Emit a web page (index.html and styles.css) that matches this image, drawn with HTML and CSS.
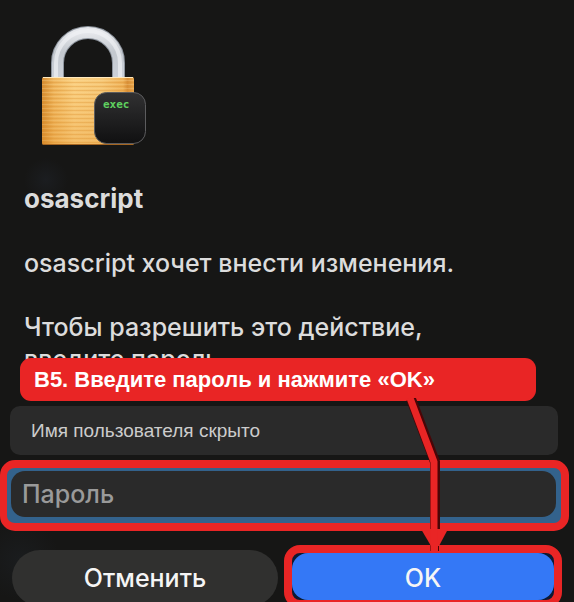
FILE: index.html
```
<!DOCTYPE html>
<html lang="ru">
<head>
  <meta charset="UTF-8">
  <meta name="viewport" content="width=device-width, initial-scale=1">
  <title>osascript</title>
  <link rel="stylesheet" href="styles.css">
</head>
<body>
  <form class="dialog">
    <svg class="lock" width="116" height="124" viewBox="0 0 116 124" aria-hidden="true">
      <defs>
        <linearGradient id="brass" x1="0" x2="1" y1="0" y2="0">
          <stop offset="0" stop-color="#d48a30"/>
          <stop offset="0.04" stop-color="#dc983e"/>
          <stop offset="0.13" stop-color="#efb65e"/>
          <stop offset="0.35" stop-color="#fad082"/>
          <stop offset="0.65" stop-color="#f6c878"/>
          <stop offset="0.88" stop-color="#eeb158"/>
          <stop offset="0.93" stop-color="#d99039"/>
          <stop offset="1" stop-color="#e9a84f"/>
        </linearGradient>
        <linearGradient id="shade" x1="0" x2="0" y1="0" y2="1">
          <stop offset="0" stop-color="#e8952a" stop-opacity="0"/>
          <stop offset="1" stop-color="#e08a20" stop-opacity="0.3"/>
        </linearGradient>
        <linearGradient id="steel" x1="0" x2="0" y1="0" y2="1">
          <stop offset="0" stop-color="#e6e8ec"/>
          <stop offset="0.4" stop-color="#c3c8ce"/>
          <stop offset="1" stop-color="#cdd2da"/>
        </linearGradient>
        <linearGradient id="badge" x1="0" x2="0" y1="0" y2="1">
          <stop offset="0" stop-color="#313132"/>
          <stop offset="1" stop-color="#101011"/>
        </linearGradient>
        <pattern id="lines" width="8" height="4" patternUnits="userSpaceOnUse">
          <rect y="1" width="8" height="1" fill="#d98c2c" opacity="0.3"/>
          <rect y="3" width="8" height="1" fill="#ffe3a8" opacity="0.25"/>
        </pattern>
      </defs>
      <path d="M17.500 56V38a30.500 30.500 0 0 1 61 0v18" fill="none" stroke="#8d949d" stroke-width="13"/>
      <path d="M17.500 56V38a30.500 30.500 0 0 1 61 0v18" fill="none" stroke="url(#steel)" stroke-width="11"/>
      <path d="M16 56V38a32 32 0 0 1 64 0v18" fill="none" stroke="#f1f3f6" stroke-width="4" opacity="0.65"/>
      <rect x="2" y="52" width="92" height="68" rx="2" fill="url(#brass)"/>
      <rect x="2" y="54" width="92" height="64" fill="url(#lines)"/>
      <rect x="2" y="52" width="92" height="68" rx="2" fill="url(#shade)"/>
      <rect x="3" y="52" width="90" height="1" fill="#ffe9be"/>
      <rect x="3" y="119" width="90" height="1" fill="#a66520"/>
      <rect x="54.500" y="67.500" width="51" height="51" rx="12" fill="url(#badge)" stroke="#5c5c5e"/>
      <text class="exec" x="63" y="83">exec</text>
    </svg>

    <h1 class="title">osascript</h1>
    <p class="message">osascript хочет внести изменения.</p>
    <p class="message">Чтобы разрешить это действие,<br>введите пароль.</p>

    <div class="fields">
      <input class="field username" type="text" value="Имя пользователя скрыто" aria-label="Имя пользователя" readonly>
      <div class="highlight">
        <input class="field password" type="password" placeholder="Пароль" aria-label="Пароль">
      </div>
    </div>

    <div class="buttons">
      <button class="btn cancel" type="button">Отменить</button>
      <div class="highlight-ok">
        <button class="btn ok" type="submit">OK</button>
      </div>
    </div>

    <div class="callout">B5. Введите пароль и нажмите «OK»</div>
    <svg class="arrow" width="48" height="156" viewBox="0 0 48 156" aria-hidden="true">
      <path d="M8 1L32 64V130M27.500 147V153M35.500 147V153" fill="none" stroke="#4a0507" stroke-width="1"/>
      <path d="M8 1L32 64V131" fill="none" stroke="#4a0507" stroke-width="10"/>
      <path d="M18 131H45L36 148H28z" fill="#e92525"/>
      <path d="M7 0L31 64V153" fill="none" stroke="#e92525" stroke-width="7"/>
    </svg>
  </form>
</body>
</html>
```
FILE: styles.css
```
* {
  box-sizing: border-box;
}
html, body {
  height: 100%;
}
body {
  margin: 0;
  overflow: hidden;
  background: #161615;
  color: #dcdcdc;
  font-family: Inter, "Noto Sans", sans-serif;
}
.dialog {
  position: relative;
  min-height: 100%;
  padding-top: 25px;
  background:
    radial-gradient(circle at 46px 180px, #1b1d20, transparent 22px),
    radial-gradient(circle at 20px 560px, #1a1c1e, transparent 40px),
    #161615;
}
.lock {
  display: block;
  margin-left: 40px;
}
.exec {
  fill: #5fd15f;
  font-family: "DejaVu Sans Mono", monospace;
  font-size: 11px;
  font-weight: 700;
}
.title, .message {
  margin: 0 24px 32px;
  line-height: 32px;
}
.title {
  margin-top: 34px;
  font-size: 26px;
  font-weight: 700;
}
.message {
  font-size: 25px;
  font-weight: 500;
}
.fields {
  margin: -1px 5px 14px 0;
}
.field {
  display: block;
  border: none;
  background: #2a2a2a;
  font-family: inherit;
  outline: none;
}
.username {
  width: calc(100% - 21px);
  height: 49px;
  margin: 0 0 5px 10px;
  padding: 0 21px;
  border-radius: 10px;
  color: #cccccc;
  font-family: "Liberation Sans", Arial, sans-serif;
  font-size: 19px;
}
.highlight {
  border: 8px solid #e92525;
  border-left-width: 7px;
  border-radius: 15px;
  background: #33628c;
  padding: 3px 5px 6px 4px;
}
.password {
  width: 100%;
  height: 46px;
  padding: 0 11px;
  border-radius: 14px;
  font-size: 25px;
  font-weight: 500;
}
.password::placeholder {
  color: #9a9a9a;
  opacity: 1;
}
.buttons {
  display: grid;
  grid-template-columns: 266fr 278fr;
  gap: 6px;
  margin: 0 12px;
}
.btn {
  width: 100%;
  border: none;
  color: #f5f5f5;
  font-family: inherit;
  font-size: 25px;
  font-weight: 500;
  cursor: pointer;
}
.cancel {
  height: 56px;
  margin-top: 5px;
  border-radius: 28px;
  background: #30302f;
}
.highlight-ok {
  border: 8px solid #e92525;
  border-radius: 16px;
  background: #0d1a33;
}
.ok {
  display: block;
  height: 47px;
  padding-top: 4px;
  border-radius: 16px;
  background: #3478f6;
}
.callout {
  position: absolute;
  top: 358px;
  left: 20px;
  right: 38px;
  padding: 0 14px;
  border-radius: 11px;
  background: #e92525;
  color: #ffffff;
  font: bold 22px/43px "Liberation Sans", Arial, sans-serif;
}
.arrow {
  position: absolute;
  top: 398px;
  left: 403px;
  pointer-events: none;
}
```
